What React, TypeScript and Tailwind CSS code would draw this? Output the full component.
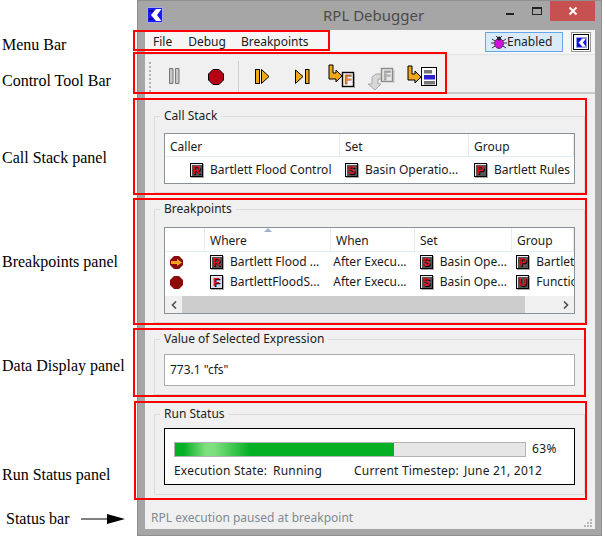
const ui = { fontFamily: '"Noto Sans", sans-serif' };

function KLogo({ size = 16 }: { size?: number }) {
  return (
    <svg width={size} height={size} viewBox="0 0 16 16">
      <rect x="0.5" y="0.5" width="15" height="15" fill="#1a1aee" stroke="#a8a8f0" />
      <path d="M9 2h5.500L10 8l4.500 6H9L4 8z" fill="#fff" />
      <path d="M2 3h4v2H2zM2 11h4v2H2z" fill="#0808a0" />
    </svg>
  );
}

function LetterIcon({ letter, light }: { letter: string; light?: boolean }) {
  return (
    <span
      className={`flex h-[14px] w-[13px] shrink-0 items-center justify-center border border-black text-[11px] font-bold leading-none text-[#e01020] shadow-[inset_1px_1px_0_#e8e8f0,1px_1px_0_#aaa] [text-shadow:1px_1px_0_#000] ${
        light ? 'bg-[#d8d8e4]' : 'bg-[#555]'
      }`}
      style={{ fontFamily: '"Liberation Sans", sans-serif' }}
    >
      {letter}
    </span>
  );
}

function Cell({ letter, light, text, className }: { letter: string; light?: boolean; text: string; className: string }) {
  return (
    <div className={`flex items-center overflow-hidden whitespace-nowrap ${className}`}>
      <LetterIcon letter={letter} light={light} />
      <span className="ml-[7px]">{text}</span>
    </div>
  );
}

function HeadCell({ className, children }: { className: string; children?: React.ReactNode }) {
  return <div className={`flex h-full items-center border-r border-[#e3ecf5] pl-[5px] pt-[3px] ${className}`}>{children}</div>;
}

function Group({ title, children, className }: { title: string; children: React.ReactNode; className: string }) {
  return (
    <fieldset className={`mx-[9px] w-[431px] border border-[#dcdcdc] px-[9px] ${className}`}>
      <legend className="ml-[-4px] px-[4px] text-[12px] leading-4 text-[#222]">{title}</legend>
      {children}
    </fieldset>
  );
}

function FArrowRight() {
  return (
    <svg width="28" height="25" viewBox="0 0 28 25">
      <path d="M2 1h4v8h3V6l6 6-6 6v-3H2z" fill="#f0a818" stroke="#000" />
      <rect x="15.5" y="8.5" width="11" height="14" fill="#f4f4fa" stroke="#000" strokeWidth="1.4" />
      <rect x="27" y="10" width="1" height="14" fill="#999" />
      <text x="17.5" y="20" fontSize="12" fontWeight="700" fill="#e88a10" stroke="#222" strokeWidth="0.3" fontFamily="Liberation Sans">F</text>
    </svg>
  );
}

function FArrowGrey() {
  return (
    <svg width="29" height="23" viewBox="0 0 29 23">
      <path d="M10 7h7v5h-5v5h3l-6 6-7-6h4V10z" fill="#d8d8d8" stroke="#a8a8a8" />
      <rect x="15.5" y="1.5" width="11" height="13" fill="#e8e8e8" stroke="#8a8a8a" strokeWidth="1.4" />
      <rect x="27" y="3" width="1.5" height="13" fill="#c0c0c0" />
      <text x="17.5" y="12.5" fontSize="12" fontWeight="700" fill="#b0b0b0" stroke="#777" strokeWidth="0.3" fontFamily="Liberation Sans">F</text>
    </svg>
  );
}

function ListArrow() {
  return (
    <svg width="31" height="22" viewBox="0 0 31 22">
      <path d="M2 1h4v8h3V6l6 6-6 6v-3H2z" fill="#f0a818" stroke="#000" />
      <rect x="15.5" y="2.5" width="15" height="18" fill="#fff" stroke="#000" />
      <rect x="18" y="5" width="8" height="3.5" fill="#777" />
      <rect x="18" y="10" width="11" height="4.5" fill="#3020d0" />
      <rect x="18" y="16" width="11" height="3.5" fill="#777" />
    </svg>
  );
}

function BugIcon() {
  return (
    <svg width="16" height="16" viewBox="0 0 16 16">
      <path d="M1 5l3 2M15 5l-3 2M0 9h4M16 9h-4M1 14l3-2M15 14l-3-2M5 2l2 2M11 2L9 4" stroke="#333" />
      <ellipse cx="8" cy="9.5" rx="4.5" ry="5" fill="#d010e0" stroke="#604060" />
      <circle cx="8" cy="4.5" r="2" fill="#222" />
    </svg>
  );
}

const redBoxes = [
  'left-[133px] top-[30px] w-[197px] h-[21px]',
  'left-[133px] top-[52px] w-[314px] h-[42px]',
  'left-[133px] top-[98px] w-[454px] h-[97px]',
  'left-[133px] top-[198px] w-[454px] h-[127px]',
  'left-[133px] top-[328px] w-[453px] h-[69px]',
  'left-[134px] top-[401px] w-[453px] h-[99px]',
];

export default function App() {
  return (
    <div className="relative flex h-[540px] w-[605px] overflow-hidden bg-white text-[12px] text-[#1a1a1a]" style={ui}>
      {/* callout labels left of the window */}
      <div className="flex w-[137px] shrink-0 flex-col whitespace-nowrap pl-[2px] text-[16px] leading-5 text-black" style={{ fontFamily: '"Liberation Serif", serif' }}>
        <div className="mt-[35px]">Menu Bar</div>
        <div className="mt-[16px]">Control Tool Bar</div>
        <div className="mt-[57px]">Call Stack panel</div>
        <div className="mt-[84px]">Breakpoints panel</div>
        <div className="mt-[84px]">Data Display panel</div>
        <div className="mt-[89px]">Run Status panel</div>
        <div className="mt-[24px] flex items-center pl-[4px]">
          <span>Status bar</span>
          <svg className="ml-[11px]" width="44" height="10" viewBox="0 0 44 10">
            <path d="M0 5h28" stroke="#000" />
            <path d="M26 0l18 5-18 5z" fill="#000" />
          </svg>
        </div>
      </div>

      {/* debugger window */}
      <div className="flex h-[536px] w-[465px] flex-col border border-[#8f8f8f] bg-[#a6a6a6] pb-[6px] pl-[7px] pr-[6px]">
        <div className="relative flex h-[29px] shrink-0 items-center">
          <div className="ml-[2px] mt-[-1px]"><KLogo /></div>
          <div className="ml-[160px] text-[15px] text-[#4c4c4c]">RPL Debugger</div>
          <div className="ml-auto flex h-full items-start">
            <span className="mr-[18px] mt-[12px] h-[2px] w-[8px] bg-[#222]" />
            <span className="mr-[8px] mt-[6px] h-[8px] w-[10px] border border-t-2 border-[#222]" />
            <div className="flex h-[20px] w-[45px] items-center justify-center bg-[#c75050]">
              <svg width="10" height="10" viewBox="0 0 10 10">
                <path d="M1.5 1.5l7 7M8.5 1.5l-7 7" stroke="#fff" strokeWidth="2" />
              </svg>
            </div>
          </div>
        </div>

        <div className="relative flex min-h-0 flex-1 flex-col bg-[#f0f0f0]">
          {/* menu bar */}
          <div className="flex h-[25px] shrink-0 items-center border-b border-[#e3e3e3] bg-[#f5f5f5] pl-[8px]">
            <span>File</span>
            <span className="ml-[16px]">Debug</span>
            <span className="ml-[15px]">Breakpoints</span>
            <div className="ml-auto flex h-[20px] w-[78px] items-center border border-[#66a7e8] bg-[#d9eafb] pl-[5px] text-[#222]">
              <BugIcon />
              <span>Enabled</span>
            </div>
            <div className="ml-[8px] mr-[4px] flex h-[20px] w-[20px] items-center justify-center border border-[#999] bg-white">
              <div className="flex h-[16px] w-[16px] items-start justify-center border border-black pt-[2px]"><KLogo size={11} /></div>
            </div>
          </div>

          {/* tool bar */}
          <div className="flex h-[39px] shrink-0 items-center border-b-2 border-[#c9c9c9] pt-[6px]">
            <div className="ml-[4px] h-[30px] w-[3px] border-l-2 border-dotted border-[#b4b4b4]" />
            <svg className="ml-[17px]" width="11" height="17" viewBox="0 0 11 17">
              <path d="M.5.5h3.5v15H.5zM6.5.5H10v15H6.5z" fill="#c8c8c8" stroke="#777" />
            </svg>
            <svg className="ml-[28px]" width="16" height="16" viewBox="0 0 16 16">
              <path d="M5 .5h6L15.500 5v6L11 15.500H5L.5 11V5z" fill="#b50016" stroke="#000" />
            </svg>
            <div className="ml-[14px] h-[32px] w-px bg-[#d0d0d0]" />
            <svg className="ml-[16px]" width="15" height="16" viewBox="0 0 15 16">
              <rect x=".5" y=".5" width="4" height="14" fill="#f0a818" stroke="#000" />
              <path d="M6.500.5L14 7.500l-7.500 7z" fill="#f0a818" stroke="#000" />
            </svg>
            <svg className="ml-[25px]" width="15" height="16" viewBox="0 0 15 16">
              <path d="M.5 1L8 7.500.5 14.500z" fill="#f0a818" stroke="#000" />
              <rect x="10.500" y=".5" width="3.500" height="14" fill="#f0a818" stroke="#000" />
            </svg>
            <div className="ml-[17px]"><FArrowRight /></div>
            <div className="ml-[11px] mt-[4px]"><FArrowGrey /></div>
            <div className="ml-[11px] mt-[-1px]"><ListArrow /></div>
          </div>

          {/* call stack */}
          <Group title="Call Stack" className="mt-[14px] pb-[8px]">
            <div className="mt-[9px] flex h-[51px] w-[411px] flex-col overflow-hidden border border-[#8c9097] bg-white">
              <div className="flex h-[23px] shrink-0 items-center border-b border-[#e3ecf5]">
                <HeadCell className="w-[175px]">Caller</HeadCell>
                <HeadCell className="w-[129px]">Set</HeadCell>
                <HeadCell className="flex-1">Group</HeadCell>
              </div>
              <div className="flex flex-1 items-center">
                <Cell letter="R" text="Bartlett Flood Control" className="w-[175px] pl-[25px]" />
                <Cell letter="S" text="Basin Operatio..." className="w-[129px] pl-[5px]" />
                <Cell letter="P" text="Bartlett Rules" className="flex-1 pl-[5px]" />
              </div>
            </div>
          </Group>

          {/* breakpoints */}
          <Group title="Breakpoints" className="mt-[8px] pb-[8px]">
            <div className="mt-[10px] flex h-[87px] w-[411px] flex-col overflow-hidden border border-[#8c9097] bg-white">
              <div className="flex h-[24px] shrink-0 items-center border-b border-[#e3ecf5]">
                <HeadCell className="w-[40px]" />
                <HeadCell className="relative w-[126px]">
                  Where
                  <svg className="absolute left-[59px] top-[0px]" width="8" height="4" viewBox="0 0 8 4">
                    <path d="M4 0l4 4H0z" fill="#9fb4cc" />
                  </svg>
                </HeadCell>
                <HeadCell className="w-[84px]">When</HeadCell>
                <HeadCell className="w-[97px]">Set</HeadCell>
                <HeadCell className="flex-1">Group</HeadCell>
              </div>
              <div className="flex h-[20px] shrink-0 items-center">
                <div className="flex w-[40px] justify-center pr-[17px]">
                  <svg width="13" height="13" viewBox="0 0 13 13">
                    <path d="M4 0h5l4 4v5l-4 4H4L0 9V4z" fill="#8c0a0a" />
                    <path d="M1 5h6V3l5 3.500L7 10V8H1z" fill="#f0a818" />
                  </svg>
                </div>
                <Cell letter="R" text="Bartlett Flood ..." className="w-[126px] pl-[5px]" />
                <div className="w-[84px] pl-[3px]">After Execu...</div>
                <Cell letter="S" text="Basin Ope..." className="w-[97px] pl-[6px]" />
                <Cell letter="P" text="Bartlett Rules" className="w-[64px] pl-[6px]" />
              </div>
              <div className="flex h-[20px] shrink-0 items-center">
                <div className="flex w-[40px] justify-center pr-[17px]">
                  <svg width="13" height="13" viewBox="0 0 13 13">
                    <path d="M4 0h5l4 4v5l-4 4H4L0 9V4z" fill="#8c0a0a" />
                  </svg>
                </div>
                <Cell letter="F" light text="BartlettFloodS..." className="w-[126px] pl-[5px]" />
                <div className="w-[84px] pl-[3px]">After Execu...</div>
                <Cell letter="S" text="Basin Ope..." className="w-[97px] pl-[6px]" />
                <Cell letter="U" text="Functions" className="w-[64px] pl-[6px]" />
              </div>
              <div className="mt-auto flex h-[17px] shrink-0 items-center bg-[#f0f0f0]">
                <div className="flex h-full w-[17px] items-center justify-center">
                  <svg width="6" height="8" viewBox="0 0 6 8"><path d="M5 .5L1.500 4 5 7.500" fill="none" stroke="#505050" strokeWidth="1.600" /></svg>
                </div>
                <div className="h-full w-[343px] bg-[#cdcdcd]" />
                <div className="ml-auto flex h-full w-[17px] items-center justify-center">
                  <svg width="6" height="8" viewBox="0 0 6 8"><path d="M1 .5L4.500 4 1 7.500" fill="none" stroke="#505050" strokeWidth="1.600" /></svg>
                </div>
              </div>
            </div>
          </Group>

          {/* selected value */}
          <Group title="Value of Selected Expression" className="mt-[8px] pb-[8px]">
            <div className="mt-[7px] flex h-[32px] w-[411px] items-center border border-[#ababab] bg-white pl-[5px]">773.1 "cfs"</div>
          </Group>

          {/* run status */}
          <Group title="Run Status" className="mt-[11px] pb-[9px]">
            <div className="mt-[6px] h-[57px] w-[411px] border border-black bg-white pl-[9px] pt-[11px]">
              <div className="flex items-center">
                <div className="h-[15px] w-[352px] border border-[#b2b2b2] bg-[#e6e6e6]">
                  <div className="h-full w-[219px] bg-[linear-gradient(90deg,#06b025_4%,#7ee07e_14%,#7ee07e_18%,#06b025_34%)]" />
                </div>
                <span className="ml-[6px] tracking-[0.4px]">63%</span>
              </div>
              <div className="mt-[4px] flex tracking-[0.2px]">
                <span className="w-[99px]">Execution State:</span>
                <span className="w-[81px]">Running</span>
                <span className="w-[110px]">Current Timestep:</span>
                <span>June 21, 2012</span>
              </div>
            </div>
          </Group>

          {/* status bar */}
          <div className="relative mt-auto flex h-[22px] shrink-0 items-center pl-[6px] text-[#808a90]">
            RPL execution paused at breakpoint
            <svg className="absolute bottom-[1px] right-[2px]" width="9" height="9" viewBox="0 0 9 9" fill="#b8b8b8">
              <path d="M6 0h2v2H6zM3 3h2v2H3zM6 3h2v2H6zM0 6h2v2H0zM3 6h2v2H3zM6 6h2v2H6z" />
            </svg>
          </div>
        </div>
      </div>

      {/* red annotation rectangles drawn over the window */}
      {redBoxes.map((box) => (
        <div key={box} className={`pointer-events-none absolute border-2 border-[#ff0000] ${box}`} />
      ))}
    </div>
  );
}
